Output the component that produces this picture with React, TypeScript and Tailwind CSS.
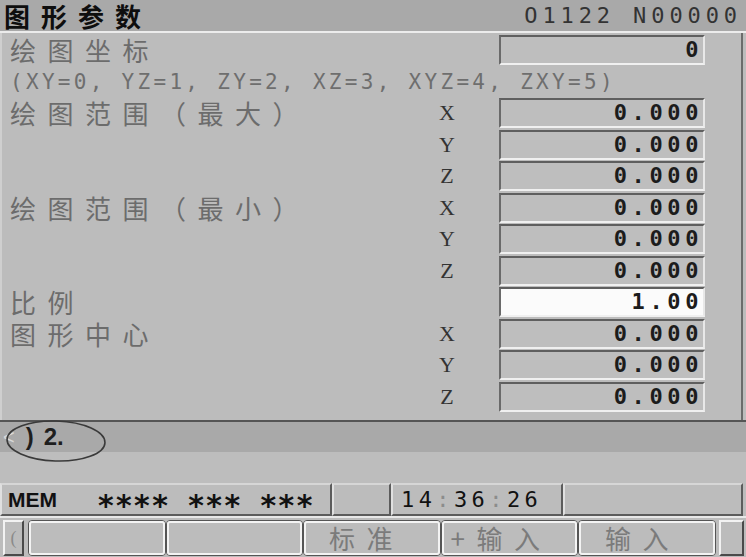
const cjk = "font-['Noto_Sans_CJK_SC',sans-serif]";
const mono = "font-['DejaVu_Sans_Mono',monospace]";

type Row = {
  label?: string;
  note?: string;
  axis?: string;
  value?: string;
  white?: boolean;
};

const rows: Row[] = [
  { label: "绘图坐标", value: "0" },
  { note: "(XY=0, YZ=1, ZY=2, XZ=3, XYZ=4, ZXY=5)" },
  { label: "绘图范围（最大）", axis: "X", value: "0.000" },
  { axis: "Y", value: "0.000" },
  { axis: "Z", value: "0.000" },
  { label: "绘图范围（最小）", axis: "X", value: "0.000" },
  { axis: "Y", value: "0.000" },
  { axis: "Z", value: "0.000" },
  { label: "比例", value: "1.00", white: true },
  { label: "图形中心", axis: "X", value: "0.000" },
  { axis: "Y", value: "0.000" },
  { axis: "Z", value: "0.000" },
];

function ParamRow({ row }: { row: Row }) {
  return (
    <div className="flex h-[31.5px] items-start">
      <div className="h-full w-[430px] pl-[8px] whitespace-nowrap">
        {row.label && (
          <span className={`${cjk} text-[26px] leading-[30px] tracking-[11.5px] text-[#6c6c6c]`}>
            {row.label}
          </span>
        )}
        {row.note && (
          <span className={`${mono} slashed-zero text-[21px] leading-[31px] tracking-[3.3px] text-[#6e6e6e]`}>
            {row.note}
          </span>
        )}
      </div>
      <div className="w-[30px] text-center font-['Liberation_Serif',serif] text-[22px] leading-[30px] text-[#333]">
        {row.axis}
      </div>
      {row.value && (
        <div
          className={`ml-[37px] flex h-[30px] w-[206px] items-center justify-end border-2 border-t-[#5f5f5f] border-l-[#6a6a6a] border-b-[#f0f0f0] border-r-[#e8e8e8] ${
            row.white ? "bg-[#fbfbfb]" : "bg-[#bebebe]"
          }`}
        >
          <span className={`${mono} slashed-zero text-[22px] font-bold leading-none tracking-[4.6px] text-[#1c1c1c]`}>
            {row.value}
          </span>
        </div>
      )}
    </div>
  );
}

function StatusCell({ className, children }: { className: string; children?: React.ReactNode }) {
  return (
    <div
      className={`flex h-full items-center border-2 border-t-[#d6d6d6] border-l-[#e0e0e0] border-b-[#5c5c5c] border-r-[#5c5c5c] ${className}`}
    >
      {children}
    </div>
  );
}

function SoftKey({ label, pad }: { label?: string; pad?: string }) {
  return (
    <div className="h-full w-[137.5px] rounded-[4px] border border-[#555]">
      <div
        className={`flex h-full items-center rounded-[3px] border-2 border-[#f3f3f3] bg-[#bcbcbc] ${pad ?? ""}`}
      >
        {label && (
          <span className={`${cjk} text-[26px] leading-none tracking-[11.5px] whitespace-nowrap text-[#7b7b7b]`}>
            {label}
          </span>
        )}
      </div>
    </div>
  );
}

export default function App() {
  return (
    <div className="relative h-[557px] w-[746px] overflow-hidden bg-[#bcbcbc]">
      {/* title bar */}
      <div className="flex h-[31px] items-center justify-between bg-[#a9a9a9] pl-[4px] pr-[4px]">
        <span className={`${cjk} text-[26px] font-bold leading-[31px] tracking-[11px] text-[#0e0e0e]`}>
          图形参数
        </span>
        <span className={`${mono} slashed-zero text-[22px] leading-[31px] tracking-[4.9px] text-[#333]`}>
          O1122 N00000
        </span>
      </div>
      <div className="h-[2px] bg-[#ececec]" />

      {/* parameter panel */}
      <div className="mr-[3px] h-[387px] border-r-2 border-l-2 border-r-[#6b6b6b] border-l-[#cfcfcf] pt-[2px]">
        {rows.map((r, i) => (
          <ParamRow key={i} row={r} />
        ))}
      </div>

      {/* key-in line */}
      <div className="h-[2px] bg-[#555]" />
      <div className="flex h-[30px] items-center bg-[#a9a9a9] pl-[3px]">
        <span className="font-['Liberation_Sans',sans-serif] text-[20px] leading-none text-[#d8d8d8]">&lt;</span>
        <span className="ml-[11px] font-['Liberation_Sans',sans-serif] text-[24px] font-bold leading-none text-[#1e1e1e]">)</span>
        <span className="ml-[10px] font-['Liberation_Sans',sans-serif] text-[24px] font-bold leading-none text-[#1e1e1e]">2.</span>
      </div>
      <div className="h-[31px] bg-[#bdbdbd]" />

      {/* status bar */}
      <div className="flex h-[33px] bg-[#bcbcbc]">
        <StatusCell className="w-[332px] pl-[6px]">
          <span className="font-['Liberation_Sans',sans-serif] text-[21px] font-bold leading-none text-[#111]">MEM</span>
          <span className={`${mono} ml-[40px] text-[30px] font-bold leading-none whitespace-pre text-[#111]`}>
            ∗∗∗∗ ∗∗∗ ∗∗∗
          </span>
        </StatusCell>
        <StatusCell className="w-[59px]" />
        <StatusCell className="w-[172px] pl-[8px]">
          <span className={`${mono} text-[22px] leading-none tracking-[4.4px] text-[#111]`}>
            14<span className="text-[#8c8c8c]">:</span>36<span className="text-[#8c8c8c]">:</span>26
          </span>
        </StatusCell>
        <StatusCell className="w-[180px]" />
      </div>

      {/* soft keys */}
      <div className="flex h-[42px] items-stretch border-t-2 border-[#e8e8e8] py-[2px] pl-[3px]">
        <div className="flex w-[21px] items-center justify-center border-2 border-t-[#f2f2f2] border-l-[#f2f2f2] border-b-[#4a4a4a] border-r-[#4a4a4a]">
          <span className="font-['Liberation_Serif',serif] text-[18px] leading-none text-[#8a8a8a]">(</span>
        </div>
        <div className="ml-[4px] flex">
          <SoftKey />
          <SoftKey />
          <SoftKey label="标准" pad="pl-[23px]" />
          <SoftKey label="+输入" pad="pl-[7px]" />
          <SoftKey label="输入" pad="pl-[24px]" />
        </div>
        <div className="ml-[3px] w-[25px] border-2 border-t-[#f2f2f2] border-l-[#f2f2f2] border-b-[#4a4a4a] border-r-[#4a4a4a]" />
      </div>

      {/* hand-drawn annotation ellipse */}
      <svg className="absolute left-[4px] top-[418px]" width="104" height="46" viewBox="0 0 104 46">
        <ellipse cx="52" cy="23" rx="49" ry="20" fill="none" stroke="#3a3a3a" strokeWidth="1.6" transform="rotate(2 52 23)" />
      </svg>
    </div>
  );
}
